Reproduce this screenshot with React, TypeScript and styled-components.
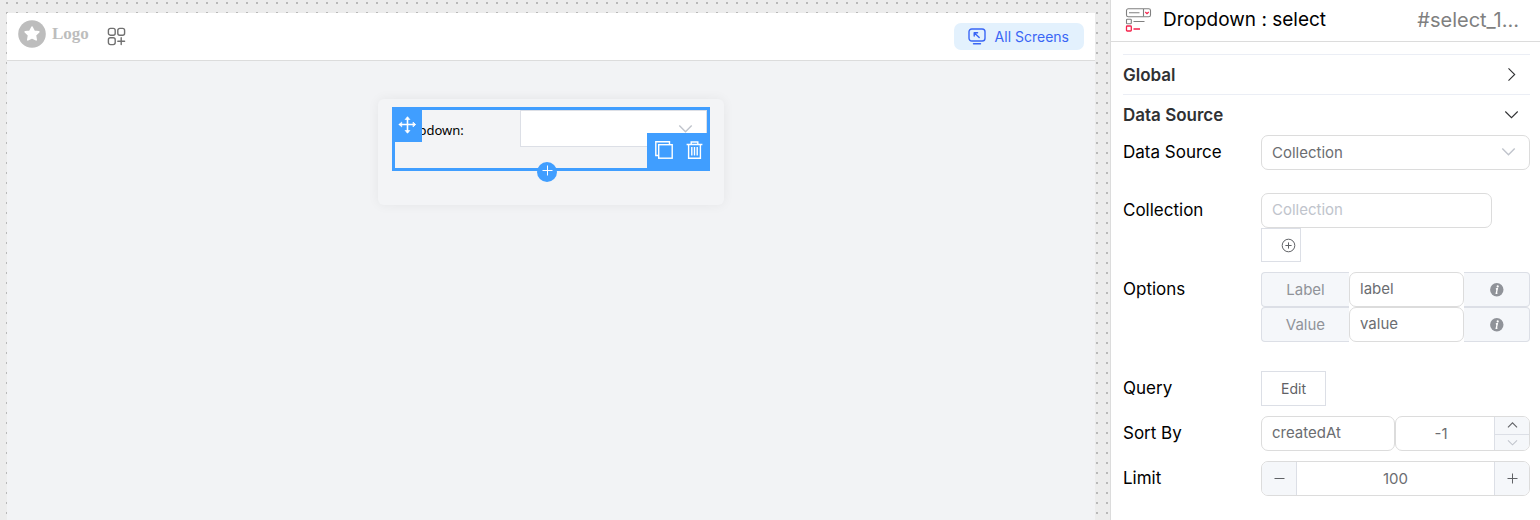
import React from 'react';
import styled, { createGlobalStyle, css } from 'styled-components';

const sans = '"Inter", "Liberation Sans", sans-serif';

const GlobalStyle = createGlobalStyle`
  *, *::before, *::after { box-sizing: border-box; }
  html, body, #root { height: 100%; }
  body { margin: 0; overflow: hidden; font-family: ${sans}; color: #000; background: #fff; }
  button, input, select { font-family: inherit; margin: 0; }
  button { cursor: pointer; padding: 0; }
  svg { display: block; }
`;

const Page = styled.div`
  display: grid;
  grid-template-columns: minmax(0, 1fr) 430px;
  min-height: 100%;
`;

const Workspace = styled.main`
  display: flex;
  padding: 13px 15px 0 7px;
  background-color: #ececec;
  background-image: conic-gradient(from 270deg at 2px 2px, #b9b9b9 90deg, transparent 0);
  background-size: 10px 10px;
  background-position: 6px 2px;
`;

const Screen = styled.section`
  flex: 1;
  display: flex;
  flex-direction: column;
  align-items: center;
  background: #f2f3f5;
`;

const ScreenBar = styled.header`
  align-self: stretch;
  display: flex;
  align-items: center;
  height: 48px;
  padding: 0 11px;
  background: #fff;
  border-bottom: 1px solid #dcdcdc;
`;

const Brand = styled.a`
  display: flex;
  align-items: center;
  gap: 6px;
  margin: 0 18px 6px 0;
  color: #bdbdbd;
  font: bold 17px/28px "Liberation Serif", serif;
  text-decoration: none;
`;

const IconButton = styled.button`
  display: grid;
  place-items: center;
  border: 0;
  background: none;
  color: inherit;
`;

const AllScreens = styled.button`
  display: flex;
  align-items: center;
  gap: 9px;
  height: 27px;
  margin-left: auto;
  padding: 0 15px 0 14px;
  border: 0;
  border-radius: 7px;
  background: #e3f1fd;
  color: #3a66f5;
  font-size: 14px;
`;

const Card = styled.div`
  width: 346px;
  margin-top: 38px;
  padding: 8px 14px 34px;
  border-radius: 6px;
  background: #f3f4f6;
  box-shadow: 0 0 12px rgba(0, 0, 0, 0.06);
`;

const Selection = styled.div`
  position: relative;
  display: flex;
  height: 64px;
  border: 3px solid #409eff;
`;

const CanvasLabel = styled.label`
  width: 125px;
  padding-left: 1px;
  font: 13px/40px "Noto Sans", sans-serif;
`;

const CanvasSelectWrap = styled.div`
  flex: 1;
  display: grid;
  height: 37px;
  align-items: center;
  color: #c0c4cc;
  > * { grid-area: 1 / 1; }
  > svg { justify-self: end; margin-right: 14px; pointer-events: none; }
`;

const CanvasSelect = styled.select`
  width: 100%;
  height: 37px;
  appearance: none;
  border: 1px solid #dcdfe6;
  border-radius: 0;
  background: #fff;
`;

const MoveHandle = styled.button`
  position: absolute;
  top: -3px;
  left: -3px;
  display: grid;
  place-items: center;
  width: 30px;
  height: 35px;
  border: 0;
  background: #409eff;
  color: #fff;
`;

const ItemActions = styled.div`
  position: absolute;
  right: -3px;
  bottom: -3px;
  display: flex;
  align-items: center;
  justify-content: center;
  gap: 13px;
  width: 63px;
  height: 38px;
  padding-bottom: 4px;
  background: #409eff;
  color: #fff;
`;

const AddHandle = styled.button`
  position: absolute;
  bottom: -14px;
  left: 142px;
  display: grid;
  place-items: center;
  width: 20px;
  height: 20px;
  padding-bottom: 3px;
  border: 0;
  border-radius: 50%;
  background: #409eff;
  color: #fff;
`;

const Panel = styled.aside`
  border-left: 1px solid #dcdcdc;
  background: #fff;
`;

const PanelHeader = styled.header`
  display: flex;
  align-items: center;
  height: 42px;
  padding: 0 21px 2px 14px;
  border-bottom: 1px solid #dcdcdc;
`;

const PanelTitle = styled.h1`
  flex: 1;
  margin: 0 0 0 11px;
  font-size: 19px;
  font-weight: 400;
`;

const ElementId = styled.span`
  color: #808080;
  font-size: 20px;
`;

const PanelBody = styled.div`
  padding: 12px 10px 24px 12px;
`;

const SectionToggle = styled.button`
  display: flex;
  align-items: center;
  justify-content: space-between;
  width: 100%;
  height: 40px;
  padding: 0 11px 0 0;
  border: 0;
  border-top: 1px solid #ebeef5;
  background: none;
  color: #303133;
  font-size: 17px;
  font-weight: 600;
`;

const Fields = styled.div`
  display: flex;
  flex-direction: column;
  gap: 10px;
  padding-top: 1px;
`;

const Field = styled.div<{ $space?: number }>`
  display: grid;
  grid-template-columns: 138px minmax(0, 1fr);
  margin-bottom: ${({ $space = 0 }) => $space}px;
`;

const fieldLabel = css`
  color: #000;
  font-size: 17px;
  line-height: 35px;
`;
const FieldLabel = styled.label`${fieldLabel}`;
const FieldName = styled.span`${fieldLabel}`;

const box = css`
  height: 35px;
  border: 1px solid #dcdcdc;
  border-radius: 7px;
  background: #fff;
  color: #6b6d71;
  font-size: 15px;
`;

const TextInput = styled.input<{ $width?: string }>`
  ${box}
  width: ${({ $width = '100%' }) => $width};
  min-width: 0;
  padding: 0 10px 2px;
  &::placeholder { color: #c0c4cc; opacity: 1; }
`;

const SelectWrap = styled.div`
  display: grid;
  align-items: center;
  color: #c0c4cc;
  > * { grid-area: 1 / 1; }
  > svg { justify-self: end; margin: 0 14px 2px 0; pointer-events: none; }
`;

const Select = styled.select`
  ${box}
  width: 100%;
  padding: 0 10px 1px;
  appearance: none;
`;

const SquareButton = styled.button<{ $width: number }>`
  display: flex;
  align-items: center;
  width: ${({ $width }) => $width}px;
  height: ${({ $width }) => ($width > 50 ? 35 : 34)}px;
  padding-left: 19px;
  border: 1px solid #dcdfe6;
  background: #fff;
  color: #606266;
  font-size: 14px;
`;

const OptionRow = styled.div`
  display: grid;
  grid-template-columns: 88px minmax(0, 1fr) 66px;
`;

const Addon = styled.label<{ $side: 'left' | 'right' }>`
  display: grid;
  place-items: center;
  height: 35px;
  border: 1px solid #dcdfe6;
  border-${({ $side }) => ($side === 'left' ? 'right' : 'left')}: 0;
  border-radius: ${({ $side }) => ($side === 'left' ? '4px 0 0 4px' : '0 4px 4px 0')};
  background: #f5f7fa;
  color: #909399;
  font-size: 15px;
`;

const SortRow = styled.div`
  display: grid;
  grid-template-columns: minmax(0, 1fr) 135px;
`;

const NumberBox = styled.div`
  ${box}
  display: flex;
  overflow: hidden;
`;

const NumberInput = styled.input`
  flex: 1;
  min-width: 0;
  padding: 0 8px 1px 0;
  border: 0;
  background: none;
  color: inherit;
  font-size: 15px;
  text-align: center;
  appearance: textfield;
  &::-webkit-inner-spin-button { appearance: none; margin: 0; }
`;

const LimitInput = styled(NumberInput)`padding: 0 0 1px;`;

const StepButton = styled.button<{ $side: 'left' | 'right' }>`
  display: grid;
  place-items: center;
  width: 35px;
  border: 0;
  border-${({ $side }) => ($side === 'left' ? 'right' : 'left')}: 1px solid #dcdfe6;
  background: #f5f7fa;
  color: #606266;
`;

const StepStack = styled.div`
  display: grid;
  grid-template-rows: 1fr 1fr;
  width: 35px;
  border-left: 1px solid #dcdfe6;
  background: #f5f7fa;
`;

const StackButton = styled.button<{ $muted?: boolean }>`
  display: grid;
  place-items: center;
  border: 0;
  border-top: ${({ $muted }) => ($muted ? '1px solid #dcdfe6' : '0')};
  background: none;
  color: ${({ $muted }) => ($muted ? '#c0c4cc' : '#606266')};
`;

type ChevronProps = { dir: 'up' | 'down' | 'right'; size?: number; weight?: number };
const chevrons = { up: 'M1.3 10 7.5 3.8 13.7 10', down: 'M1.3 4.5 7.5 10.7 13.7 4.5', right: 'M4.5 1.3 10.7 7.5 4.5 13.7' };
const Chevron = ({ dir, size = 15, weight = 1.1 }: ChevronProps) => (
  <svg width={size} height={size} viewBox="0 0 15 15" fill="none" stroke="currentColor" strokeWidth={weight}>
    <path d={chevrons[dir]} />
  </svg>
);

const StarBadge = () => (
  <svg width="28" height="28" viewBox="0 0 28 28">
    <circle cx="14" cy="14" r="13.8" fill="#bdbdbd" />
    <path d="M14 7l2.1 4.2 4.7.7-3.4 3.3.8 4.7-4.2-2.2-4.2 2.2.8-4.7-3.4-3.3 4.7-.7z" fill="#fff" stroke="#fff" strokeWidth="1.6" strokeLinejoin="round" />
  </svg>
);

const GridPlus = () => (
  <svg width="19" height="19" viewBox="0 0 19 19" fill="none" stroke="#707070" strokeWidth="1.4" strokeLinecap="round">
    <rect x="1.4" y="1.4" width="6.8" height="6.8" rx="2" />
    <rect x="10.8" y="1.4" width="6.8" height="6.8" rx="2" />
    <rect x="1.4" y="10.8" width="6.8" height="6.8" rx="2" />
    <path d="M14.2 10.8v6.8M10.8 14.2h6.8" />
  </svg>
);

const ScreenIcon = () => (
  <svg width="18" height="17" viewBox="0 0 18 17" fill="none" stroke="#3a66f5" strokeWidth="1.4" strokeLinecap="round" strokeLinejoin="round">
    <rect x="1" y="1" width="16" height="12" rx="2.8" />
    <path d="M5.5 15.8h7M11.2 9.6 6.4 4.9M6.2 8V4.7h3.4" />
  </svg>
);

const MoveIcon = () => (
  <svg width="18" height="18" viewBox="0 0 18 18" fill="none" stroke="currentColor" strokeWidth="1.6" strokeLinecap="round" strokeLinejoin="round">
    <path d="M9.5 1.4v15.2M1.4 8.5h15.2" />
    <path d="M7.4 3.2 9.5 1l2.1 2.2zM7.4 14.8 9.5 17l2.1-2.2zM3.4 6.4 1.2 8.5l2.2 2.1zM15.4 6.4 17.6 8.5l-2.2 2.1z" fill="currentColor" strokeWidth=".8" />
  </svg>
);

const CopyIcon = () => (
  <svg width="18" height="18" viewBox="0 0 18 18" fill="none" stroke="currentColor" strokeWidth="1.4">
    <path d="M3 14.5H.8V.8h13.7V3" />
    <rect x="3.7" y="3.7" width="13.5" height="13.5" />
  </svg>
);

const TrashIcon = () => (
  <svg width="17" height="18" viewBox="0 0 17 18" fill="none" stroke="currentColor" strokeWidth="1.4">
    <path d="M.6 3.5h15.8M5.2 3.5V1h6.6v2.5M2.6 3.5v13.7h11.8V3.5M5.8 6v8.5M8.5 6v8.5M11.2 6v8.5" />
  </svg>
);

const Cross = ({ minus = false }: { minus?: boolean }) => (
  <svg width="13" height="13" viewBox="0 0 13 13" fill="none" stroke="currentColor" strokeWidth="1">
    <path d={minus ? 'M1.5 6.5h10' : 'M1.5 6.5h10M6.5 1.5v10'} />
  </svg>
);

const CirclePlus = () => (
  <svg width="15" height="15" viewBox="0 0 15 15" fill="none" stroke="#606266" strokeWidth="1">
    <circle cx="7.5" cy="7.5" r="6.3" />
    <path d="M7.5 4.4v6.2M4.4 7.5h6.2" />
  </svg>
);

const InfoIcon = () => (
  <svg width="14" height="14" viewBox="0 0 14 14">
    <circle cx="6.8" cy="6.8" r="6.7" fill="#909399" />
    <path d="M5.9 6 7.3 5.7 6.3 10.2h1.1" fill="none" stroke="#fff" strokeWidth="1.4" />
    <circle cx="7.7" cy="3.4" r="1.1" fill="#fff" />
  </svg>
);

const DropdownIcon = () => (
  <svg width="27" height="24" viewBox="0 0 27 24" fill="none" stroke="#808080" strokeWidth="1.1">
    <rect x="1.5" y=".8" width="24" height="8" rx="1.8" />
    <path d="M18.5 1v7.6M4 4.8h10.5M8.5 13.5H19.5" />
    <rect x="1.5" y="11.2" width="4.8" height="4.6" rx=".8" />
    <g stroke="#f5224b" strokeWidth="1.3">
      <rect x="1.5" y="18" width="4.8" height="5" rx=".8" />
      <path d="M8.5 21h6.5M20.3 4l1.7 1.6L23.7 4" />
    </g>
  </svg>
);

export default function App() {
  return (
    <>
      <GlobalStyle />
      <Page>
        <Workspace>
          <Screen>
            <ScreenBar>
              <Brand href="#"><StarBadge />Logo</Brand>
              <IconButton aria-label="Add block"><GridPlus /></IconButton>
              <AllScreens><ScreenIcon />All Screens</AllScreens>
            </ScreenBar>
            <Card>
              <Selection>
                <CanvasLabel htmlFor="canvas-dropdown">Dropdown:</CanvasLabel>
                <CanvasSelectWrap>
                  <CanvasSelect id="canvas-dropdown" />
                  <Chevron dir="down" weight={1.4} />
                </CanvasSelectWrap>
                <MoveHandle aria-label="Move"><MoveIcon /></MoveHandle>
                <ItemActions>
                  <IconButton aria-label="Duplicate"><CopyIcon /></IconButton>
                  <IconButton aria-label="Delete"><TrashIcon /></IconButton>
                </ItemActions>
                <AddHandle aria-label="Add below"><Cross /></AddHandle>
              </Selection>
            </Card>
          </Screen>
        </Workspace>
        <Panel>
          <PanelHeader>
            <DropdownIcon />
            <PanelTitle>Dropdown : select</PanelTitle>
            <ElementId>#select_1…</ElementId>
          </PanelHeader>
          <PanelBody>
            <SectionToggle aria-expanded={false}>Global<Chevron dir="right" /></SectionToggle>
            <SectionToggle aria-expanded>Data Source<Chevron dir="down" /></SectionToggle>
            <Fields>
              <Field $space={13}>
                <FieldLabel htmlFor="source">Data Source</FieldLabel>
                <SelectWrap>
                  <Select id="source"><option>Collection</option></Select>
                  <Chevron dir="down" weight={1.4} />
                </SelectWrap>
              </Field>
              <Field>
                <FieldLabel htmlFor="collection">Collection</FieldLabel>
                <div>
                  <TextInput id="collection" placeholder="Collection" $width="calc(100% - 38px)" />
                  <SquareButton $width={40} aria-label="Add collection"><CirclePlus /></SquareButton>
                </div>
              </Field>
              <Field $space={19}>
                <FieldName>Options</FieldName>
                <div>
                  <OptionRow>
                    <Addon $side="left" htmlFor="opt-label">Label</Addon>
                    <TextInput id="opt-label" defaultValue="label" />
                    <Addon as="span" $side="right"><InfoIcon /></Addon>
                  </OptionRow>
                  <OptionRow>
                    <Addon $side="left" htmlFor="opt-value">Value</Addon>
                    <TextInput id="opt-value" defaultValue="value" />
                    <Addon as="span" $side="right"><InfoIcon /></Addon>
                  </OptionRow>
                </div>
              </Field>
              <Field>
                <FieldName>Query</FieldName>
                <SquareButton $width={65}>Edit</SquareButton>
              </Field>
              <Field>
                <FieldLabel htmlFor="sort">Sort By</FieldLabel>
                <SortRow>
                  <TextInput id="sort" defaultValue="createdAt" />
                  <NumberBox>
                    <NumberInput type="number" aria-label="Sort direction" defaultValue={-1} />
                    <StepStack>
                      <StackButton aria-label="Increase"><Chevron dir="up" size={11} weight={1.4} /></StackButton>
                      <StackButton $muted aria-label="Decrease"><Chevron dir="down" size={11} weight={1.4} /></StackButton>
                    </StepStack>
                  </NumberBox>
                </SortRow>
              </Field>
              <Field>
                <FieldLabel htmlFor="limit">Limit</FieldLabel>
                <NumberBox>
                  <StepButton $side="left" aria-label="Less"><Cross minus /></StepButton>
                  <LimitInput id="limit" type="number" defaultValue={100} />
                  <StepButton $side="right" aria-label="More"><Cross /></StepButton>
                </NumberBox>
              </Field>
            </Fields>
          </PanelBody>
        </Panel>
      </Page>
    </>
  );
}
